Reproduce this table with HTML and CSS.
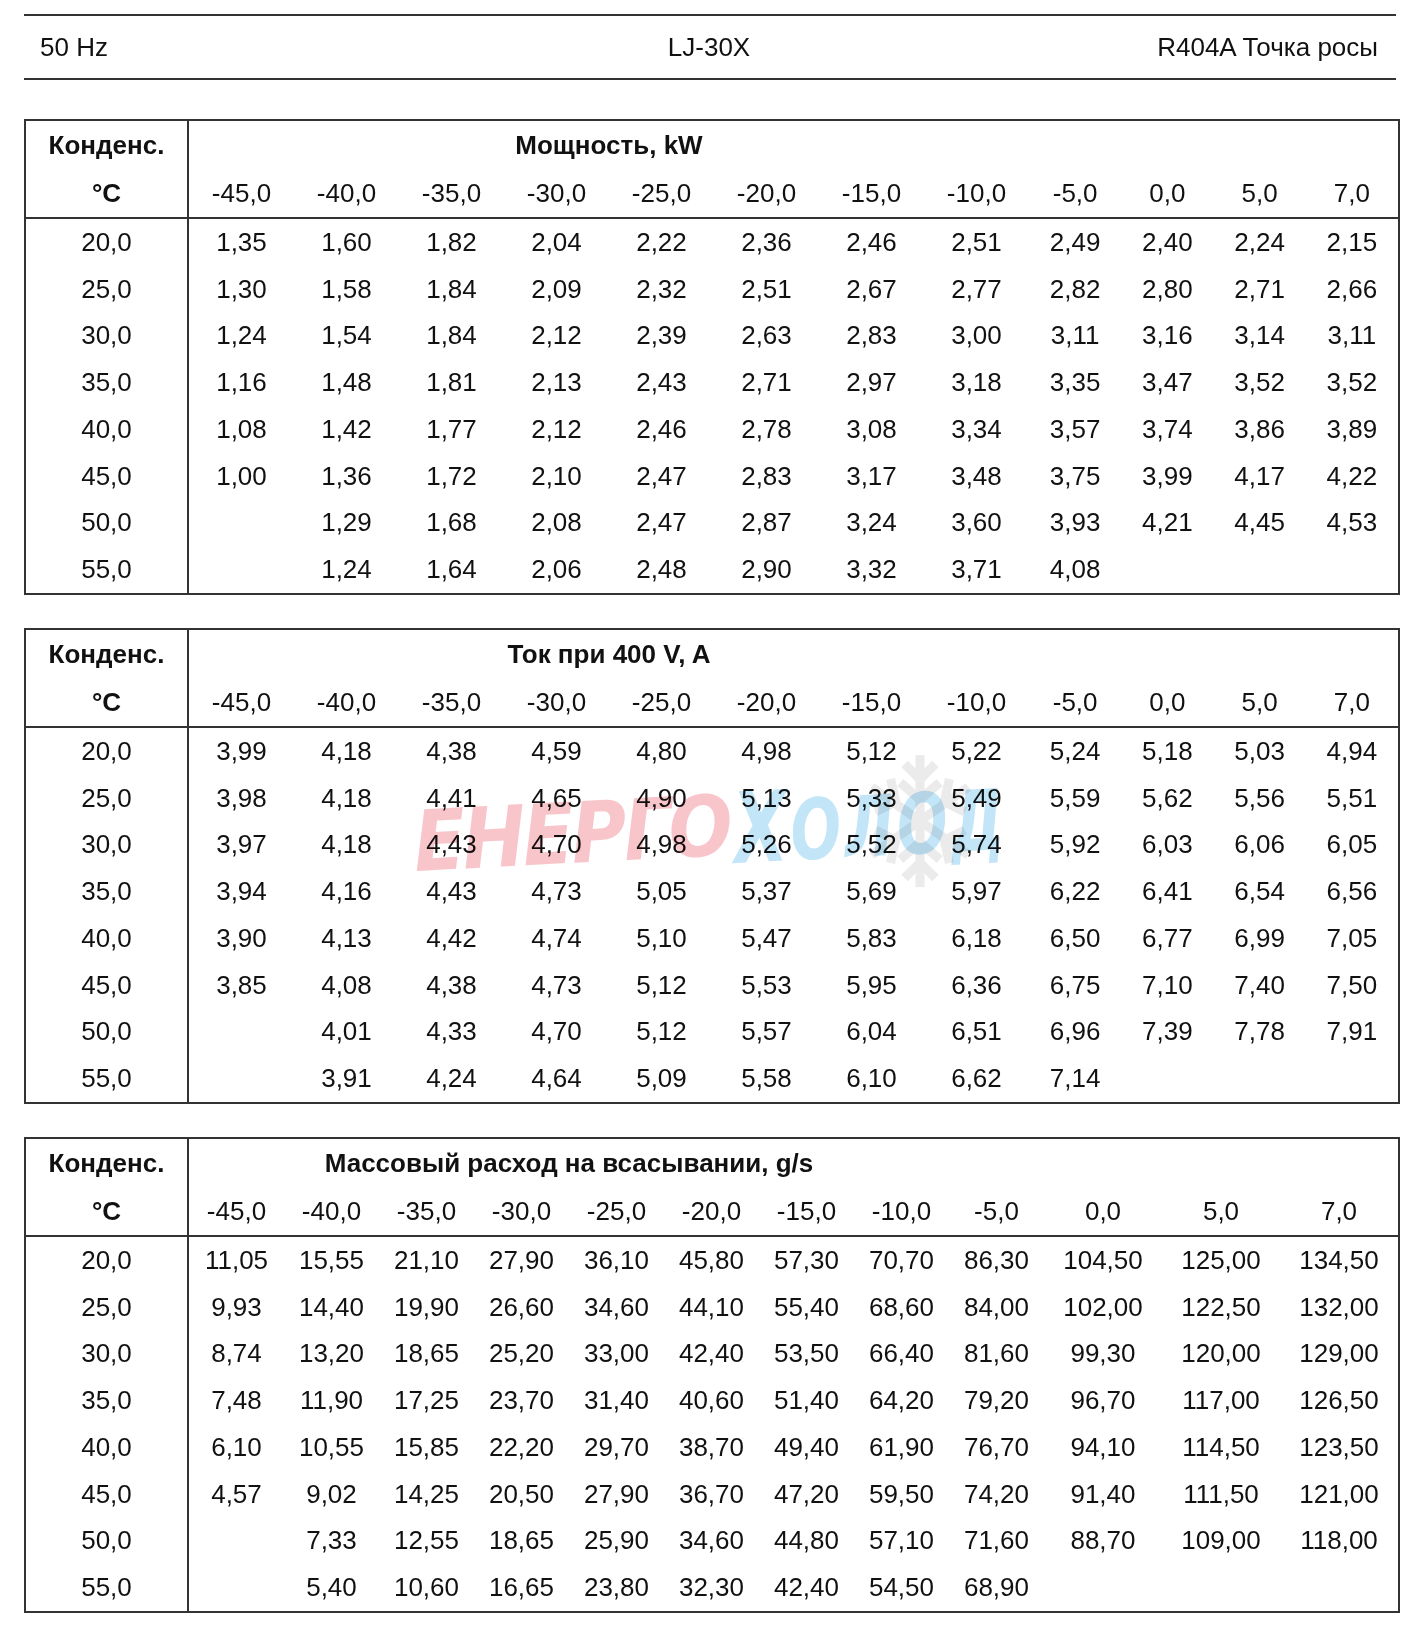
FILE: index.html
```html
<!DOCTYPE html>
<html lang="ru">
<head>
<meta charset="utf-8">
<title>LJ-30X R404A</title>
<link rel="stylesheet" href="styles.css">
</head>
<body>
<div class="page">
  <div class="topbar">
    <div class="tb-l">50 Hz</div>
    <div class="tb-c">LJ-30X</div>
    <div class="tb-r">R404A Точка росы</div>
  </div>

  <div class="tbl cols-a">
    <div class="c first b">Конденс.</div>
    <div class="c b title-8">Мощность, kW</div>
    <div class="c span-4"></div>
    <div class="c first b hd2">°C</div>
    <div class="c hd2">-45,0</div><div class="c hd2">-40,0</div><div class="c hd2">-35,0</div><div class="c hd2">-30,0</div><div class="c hd2">-25,0</div><div class="c hd2">-20,0</div><div class="c hd2">-15,0</div><div class="c hd2">-10,0</div><div class="c hd2">-5,0</div><div class="c hd2">0,0</div><div class="c hd2">5,0</div><div class="c hd2">7,0</div>
    <div class="c first">20,0</div><div class="c">1,35</div><div class="c">1,60</div><div class="c">1,82</div><div class="c">2,04</div><div class="c">2,22</div><div class="c">2,36</div><div class="c">2,46</div><div class="c">2,51</div><div class="c">2,49</div><div class="c">2,40</div><div class="c">2,24</div><div class="c">2,15</div>
    <div class="c first">25,0</div><div class="c">1,30</div><div class="c">1,58</div><div class="c">1,84</div><div class="c">2,09</div><div class="c">2,32</div><div class="c">2,51</div><div class="c">2,67</div><div class="c">2,77</div><div class="c">2,82</div><div class="c">2,80</div><div class="c">2,71</div><div class="c">2,66</div>
    <div class="c first">30,0</div><div class="c">1,24</div><div class="c">1,54</div><div class="c">1,84</div><div class="c">2,12</div><div class="c">2,39</div><div class="c">2,63</div><div class="c">2,83</div><div class="c">3,00</div><div class="c">3,11</div><div class="c">3,16</div><div class="c">3,14</div><div class="c">3,11</div>
    <div class="c first">35,0</div><div class="c">1,16</div><div class="c">1,48</div><div class="c">1,81</div><div class="c">2,13</div><div class="c">2,43</div><div class="c">2,71</div><div class="c">2,97</div><div class="c">3,18</div><div class="c">3,35</div><div class="c">3,47</div><div class="c">3,52</div><div class="c">3,52</div>
    <div class="c first">40,0</div><div class="c">1,08</div><div class="c">1,42</div><div class="c">1,77</div><div class="c">2,12</div><div class="c">2,46</div><div class="c">2,78</div><div class="c">3,08</div><div class="c">3,34</div><div class="c">3,57</div><div class="c">3,74</div><div class="c">3,86</div><div class="c">3,89</div>
    <div class="c first">45,0</div><div class="c">1,00</div><div class="c">1,36</div><div class="c">1,72</div><div class="c">2,10</div><div class="c">2,47</div><div class="c">2,83</div><div class="c">3,17</div><div class="c">3,48</div><div class="c">3,75</div><div class="c">3,99</div><div class="c">4,17</div><div class="c">4,22</div>
    <div class="c first">50,0</div><div class="c"></div><div class="c">1,29</div><div class="c">1,68</div><div class="c">2,08</div><div class="c">2,47</div><div class="c">2,87</div><div class="c">3,24</div><div class="c">3,60</div><div class="c">3,93</div><div class="c">4,21</div><div class="c">4,45</div><div class="c">4,53</div>
    <div class="c first">55,0</div><div class="c"></div><div class="c">1,24</div><div class="c">1,64</div><div class="c">2,06</div><div class="c">2,48</div><div class="c">2,90</div><div class="c">3,32</div><div class="c">3,71</div><div class="c">4,08</div><div class="c"></div><div class="c"></div><div class="c"></div>
  </div>

  <div class="tbl cols-a">
    <div class="c first b">Конденс.</div>
    <div class="c b title-8">Ток при 400 V, A</div>
    <div class="c span-4"></div>
    <div class="c first b hd2">°C</div>
    <div class="c hd2">-45,0</div><div class="c hd2">-40,0</div><div class="c hd2">-35,0</div><div class="c hd2">-30,0</div><div class="c hd2">-25,0</div><div class="c hd2">-20,0</div><div class="c hd2">-15,0</div><div class="c hd2">-10,0</div><div class="c hd2">-5,0</div><div class="c hd2">0,0</div><div class="c hd2">5,0</div><div class="c hd2">7,0</div>
    <div class="c first">20,0</div><div class="c">3,99</div><div class="c">4,18</div><div class="c">4,38</div><div class="c">4,59</div><div class="c">4,80</div><div class="c">4,98</div><div class="c">5,12</div><div class="c">5,22</div><div class="c">5,24</div><div class="c">5,18</div><div class="c">5,03</div><div class="c">4,94</div>
    <div class="c first">25,0</div><div class="c">3,98</div><div class="c">4,18</div><div class="c">4,41</div><div class="c">4,65</div><div class="c">4,90</div><div class="c">5,13</div><div class="c">5,33</div><div class="c">5,49</div><div class="c">5,59</div><div class="c">5,62</div><div class="c">5,56</div><div class="c">5,51</div>
    <div class="c first">30,0</div><div class="c">3,97</div><div class="c">4,18</div><div class="c">4,43</div><div class="c">4,70</div><div class="c">4,98</div><div class="c">5,26</div><div class="c">5,52</div><div class="c">5,74</div><div class="c">5,92</div><div class="c">6,03</div><div class="c">6,06</div><div class="c">6,05</div>
    <div class="c first">35,0</div><div class="c">3,94</div><div class="c">4,16</div><div class="c">4,43</div><div class="c">4,73</div><div class="c">5,05</div><div class="c">5,37</div><div class="c">5,69</div><div class="c">5,97</div><div class="c">6,22</div><div class="c">6,41</div><div class="c">6,54</div><div class="c">6,56</div>
    <div class="c first">40,0</div><div class="c">3,90</div><div class="c">4,13</div><div class="c">4,42</div><div class="c">4,74</div><div class="c">5,10</div><div class="c">5,47</div><div class="c">5,83</div><div class="c">6,18</div><div class="c">6,50</div><div class="c">6,77</div><div class="c">6,99</div><div class="c">7,05</div>
    <div class="c first">45,0</div><div class="c">3,85</div><div class="c">4,08</div><div class="c">4,38</div><div class="c">4,73</div><div class="c">5,12</div><div class="c">5,53</div><div class="c">5,95</div><div class="c">6,36</div><div class="c">6,75</div><div class="c">7,10</div><div class="c">7,40</div><div class="c">7,50</div>
    <div class="c first">50,0</div><div class="c"></div><div class="c">4,01</div><div class="c">4,33</div><div class="c">4,70</div><div class="c">5,12</div><div class="c">5,57</div><div class="c">6,04</div><div class="c">6,51</div><div class="c">6,96</div><div class="c">7,39</div><div class="c">7,78</div><div class="c">7,91</div>
    <div class="c first">55,0</div><div class="c"></div><div class="c">3,91</div><div class="c">4,24</div><div class="c">4,64</div><div class="c">5,09</div><div class="c">5,58</div><div class="c">6,10</div><div class="c">6,62</div><div class="c">7,14</div><div class="c"></div><div class="c"></div><div class="c"></div>
  </div>

  <div class="tbl cols-b">
    <div class="c first b">Конденс.</div>
    <div class="c b title-8">Массовый расход на всасывании, g/s</div>
    <div class="c span-4"></div>
    <div class="c first b hd2">°C</div>
    <div class="c hd2">-45,0</div><div class="c hd2">-40,0</div><div class="c hd2">-35,0</div><div class="c hd2">-30,0</div><div class="c hd2">-25,0</div><div class="c hd2">-20,0</div><div class="c hd2">-15,0</div><div class="c hd2">-10,0</div><div class="c hd2">-5,0</div><div class="c hd2">0,0</div><div class="c hd2">5,0</div><div class="c hd2">7,0</div>
    <div class="c first">20,0</div><div class="c">11,05</div><div class="c">15,55</div><div class="c">21,10</div><div class="c">27,90</div><div class="c">36,10</div><div class="c">45,80</div><div class="c">57,30</div><div class="c">70,70</div><div class="c">86,30</div><div class="c">104,50</div><div class="c">125,00</div><div class="c">134,50</div>
    <div class="c first">25,0</div><div class="c">9,93</div><div class="c">14,40</div><div class="c">19,90</div><div class="c">26,60</div><div class="c">34,60</div><div class="c">44,10</div><div class="c">55,40</div><div class="c">68,60</div><div class="c">84,00</div><div class="c">102,00</div><div class="c">122,50</div><div class="c">132,00</div>
    <div class="c first">30,0</div><div class="c">8,74</div><div class="c">13,20</div><div class="c">18,65</div><div class="c">25,20</div><div class="c">33,00</div><div class="c">42,40</div><div class="c">53,50</div><div class="c">66,40</div><div class="c">81,60</div><div class="c">99,30</div><div class="c">120,00</div><div class="c">129,00</div>
    <div class="c first">35,0</div><div class="c">7,48</div><div class="c">11,90</div><div class="c">17,25</div><div class="c">23,70</div><div class="c">31,40</div><div class="c">40,60</div><div class="c">51,40</div><div class="c">64,20</div><div class="c">79,20</div><div class="c">96,70</div><div class="c">117,00</div><div class="c">126,50</div>
    <div class="c first">40,0</div><div class="c">6,10</div><div class="c">10,55</div><div class="c">15,85</div><div class="c">22,20</div><div class="c">29,70</div><div class="c">38,70</div><div class="c">49,40</div><div class="c">61,90</div><div class="c">76,70</div><div class="c">94,10</div><div class="c">114,50</div><div class="c">123,50</div>
    <div class="c first">45,0</div><div class="c">4,57</div><div class="c">9,02</div><div class="c">14,25</div><div class="c">20,50</div><div class="c">27,90</div><div class="c">36,70</div><div class="c">47,20</div><div class="c">59,50</div><div class="c">74,20</div><div class="c">91,40</div><div class="c">111,50</div><div class="c">121,00</div>
    <div class="c first">50,0</div><div class="c"></div><div class="c">7,33</div><div class="c">12,55</div><div class="c">18,65</div><div class="c">25,90</div><div class="c">34,60</div><div class="c">44,80</div><div class="c">57,10</div><div class="c">71,60</div><div class="c">88,70</div><div class="c">109,00</div><div class="c">118,00</div>
    <div class="c first">55,0</div><div class="c"></div><div class="c">5,40</div><div class="c">10,60</div><div class="c">16,65</div><div class="c">23,80</div><div class="c">32,30</div><div class="c">42,40</div><div class="c">54,50</div><div class="c">68,90</div><div class="c"></div><div class="c"></div><div class="c"></div>
  </div>

  <svg class="flake" viewBox="0 0 100 130" aria-hidden="true">
    <g stroke="#ebebeb" stroke-width="9" stroke-linecap="square" fill="none">
      <path d="M50 4 V126"/>
      <path d="M6 34 L94 96"/>
      <path d="M94 34 L6 96"/>
      <path d="M38 12 L50 24 L62 12"/>
      <path d="M34 30 L50 44 L66 30"/>
      <path d="M38 118 L50 106 L62 118"/>
      <path d="M34 100 L50 86 L66 100"/>
      <path d="M10 54 L26 46 L22 28"/>
      <path d="M90 54 L74 46 L78 28"/>
      <path d="M10 76 L26 84 L22 102"/>
      <path d="M90 76 L74 84 L78 102"/>
    </g>
  </svg>
  <div class="wm wm-red" aria-hidden="true">Енерго</div>
  <div class="wm wm-blue" aria-hidden="true"><span class="wm-big">Х</span>олод</div>
</div>
</body>
</html>
```

FILE: styles.css
```css
html, body {
  margin: 0;
  background: #ffffff;
}

body {
  font-family: "Liberation Sans", Arial, sans-serif;
  font-size: 26px;
  color: #111111;
}

.page {
  position: relative;
  width: 1420px;
  height: 1636px;
  padding: 14px 0 0 24px;
  box-sizing: border-box;
  overflow: hidden;
}

.topbar {
  width: 1372px;
  height: 66px;
  box-sizing: border-box;
  border-top: 2px solid #333333;
  border-bottom: 2px solid #333333;
  padding: 0 18px 0 16px;
  display: grid;
  grid-template-columns: 1fr auto 1fr;
  align-items: center;
}

.tb-l { justify-self: start; }
.tb-c { justify-self: center; }
.tb-r { justify-self: end; }

.tbl {
  width: 1372px;
  margin-top: 39px;
  border: 2px solid #333333;
  display: grid;
  grid-template-rows: 48px 50px repeat(8, 46.75px);
}

.tbl + .tbl {
  margin-top: 33px;
}

.cols-a {
  grid-template-columns: 163px repeat(8, 105px) repeat(4, 1fr);
}

.cols-b {
  grid-template-columns: 163px repeat(9, 95px) repeat(3, 1fr);
}

.c {
  box-sizing: border-box;
  display: flex;
  align-items: center;
  justify-content: center;
  white-space: nowrap;
}

.first {
  border-right: 2px solid #333333;
}

.hd2 {
  border-bottom: 2px solid #333333;
}

.b {
  font-weight: bold;
}

.title-8 {
  grid-column: span 8;
}

.span-4 {
  grid-column: span 4;
}

.flake {
  position: absolute;
  left: 868px;
  top: 755px;
  width: 104px;
  height: 132px;
  mix-blend-mode: multiply;
  pointer-events: none;
}

.wm {
  position: absolute;
  font-family: "DejaVu Sans Condensed", "DejaVu Sans", sans-serif;
  font-stretch: condensed;
  font-weight: bold;
  font-style: italic;
  text-transform: uppercase;
  font-size: 84px;
  line-height: 1;
  white-space: nowrap;
  transform-origin: left bottom;
  mix-blend-mode: multiply;
  pointer-events: none;
}

.wm-red {
  left: 416px;
  top: 800px;
  color: #f8c5ca;
  letter-spacing: -3px;
  transform: rotate(-3deg) scaleX(1);
}

.wm-blue {
  left: 736px;
  top: 780px;
  color: #c3e5f8;
  letter-spacing: 4px;
  transform: rotate(-3deg) scaleX(0.79);
}

.wm-big {
  font-size: 98px;
}
```
